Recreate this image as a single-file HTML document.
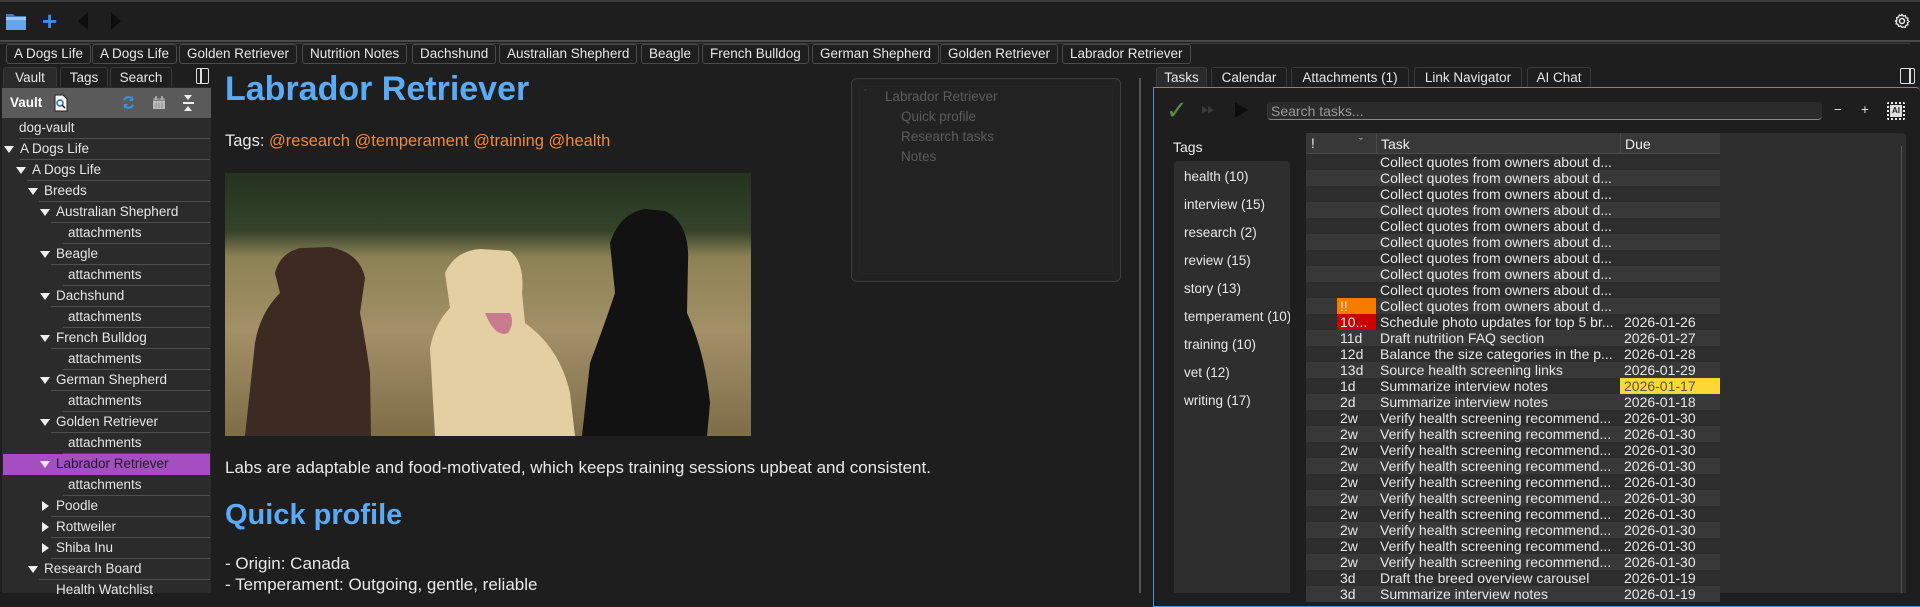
<!DOCTYPE html>
<html><head><meta charset="utf-8">
<style>
*{box-sizing:border-box;margin:0;padding:0}
body{width:1920px;height:593px;overflow:hidden;background:#1e1e1e;font-family:"Liberation Sans",sans-serif;font-size:13.5px;color:#e6e6e6;position:relative}
.a{position:absolute;white-space:nowrap}
.chip{position:absolute;top:44px;height:20px;border:1px solid #4a4a4a;border-radius:3px;line-height:18px;padding:0 7px;color:#e8e8e8;font-size:13.5px;background:#1e1e1e}
.tab{position:absolute;top:67px;height:20px;border:1px solid #3a3a3a;border-bottom:none;border-radius:3px 3px 0 0;line-height:19px;text-align:center;color:#e8e8e8;background:#1e1e1e}
.row{position:absolute;left:0;width:211px;height:21px;line-height:20px}
.row .sep{position:absolute;bottom:0;right:1px;height:1px;background:#4e4e4e}
.row .t{position:absolute;top:0}
.tri{position:absolute;top:7px;width:0;height:0;border-left:5px solid transparent;border-right:5px solid transparent;border-top:7px solid #eee}
.trr{position:absolute;top:5px;width:0;height:0;border-top:5px solid transparent;border-bottom:5px solid transparent;border-left:7px solid #eee}
.tr{position:absolute;left:1306px;width:414px;height:16px;line-height:16px;font-size:14px;color:#e8e8e8}
.tr span{position:absolute;top:0;height:16px}
.tag{position:absolute;left:1184px;font-size:13.5px;color:#e8e8e8}
</style></head><body>
<div class="a" style="left:0;top:0;width:1920px;height:2px;background:#3c3c3c"></div>
<svg class="a" style="left:5px;top:12px" width="22" height="19" viewBox="0 0 22 19"><path d="M1 2h7l2 2h11v14H1z" fill="#3d7cc9"/><rect x="1" y="5" width="20" height="13" fill="#6aa4e6"/><rect x="1" y="5" width="20" height="3" fill="#9cc6f2"/></svg>
<div class="a" style="left:42px;top:6px;font-size:26px;font-weight:bold;color:#3a8ee6;line-height:30px">+</div>
<div class="a" style="left:78px;top:12px;width:0;height:0;border-top:9px solid transparent;border-bottom:9px solid transparent;border-right:10px solid #0d0d0d"></div>
<div class="a" style="left:111px;top:12px;width:0;height:0;border-top:9px solid transparent;border-bottom:9px solid transparent;border-left:10px solid #0d0d0d"></div>
<svg class="a" style="left:1894px;top:13px" width="16" height="16" viewBox="0 0 16 16"><circle cx="8" cy="8" r="2.5" fill="none" stroke="#eee" stroke-width="1.5"/><path d="M8 1.5l1.3 1.6 2-.5.6 2 2 .6-.5 2 1.6 1.3-1.6 1.3.5 2-2 .6-.6 2-2-.5L8 14.5l-1.3-1.6-2 .5-.6-2-2-.6.5-2L1.5 8l1.6-1.3-.5-2 2-.6.6-2 2 .5z" fill="none" stroke="#eee" stroke-width="1.3"/></svg>
<div class="a" style="left:0;top:40px;width:1920px;height:2px;background:#4a4a4a"></div>
<div class="a" style="left:0;top:43px;width:1910px;height:1px;background:#3c3c3c"></div>
<div class="chip" style="left:6px">A Dogs Life</div>
<div class="chip" style="left:92px">A Dogs Life</div>
<div class="chip" style="left:179px">Golden Retriever</div>
<div class="chip" style="left:302px">Nutrition Notes</div>
<div class="chip" style="left:412px">Dachshund</div>
<div class="chip" style="left:499px">Australian Shepherd</div>
<div class="chip" style="left:641px">Beagle</div>
<div class="chip" style="left:702px">French Bulldog</div>
<div class="chip" style="left:812px">German Shepherd</div>
<div class="chip" style="left:940px">Golden Retriever</div>
<div class="chip" style="left:1062px">Labrador Retriever</div>
<div class="tab" style="left:3px;width:54px;background:#2b2b2b">Vault</div>
<div class="tab" style="left:60px;width:48px">Tags</div>
<div class="tab" style="left:110px;width:62px">Search</div>
<div class="a" style="left:196px;top:68px;width:13px;height:16px;border:1.5px solid #ddd;border-radius:2px"></div>
<div class="a" style="left:200px;top:68px;width:1.5px;height:16px;background:#ddd"></div>
<div class="a" style="left:2px;top:87px;width:209px;height:506px;background:#2b2b2b"></div>
<div class="a" style="left:2px;top:88px;width:209px;height:30px;background:#5a5a5a"></div>
<div class="a" style="left:10px;top:95px;font-weight:bold;color:#fff;font-size:13.5px">Vault</div>
<svg class="a" style="left:53px;top:94px" width="16" height="18" viewBox="0 0 16 18"><path d="M2 1h8l4 4v12H2z" fill="#f4f4f4" stroke="#222"/><circle cx="7" cy="9" r="3" fill="none" stroke="#2b6cb0" stroke-width="1.5"/><path d="M9 11l3 3" stroke="#222" stroke-width="1.5"/></svg>
<svg class="a" style="left:121px;top:95px" width="15" height="15" viewBox="0 0 15 15"><path d="M12 5A5 5 0 0 0 3 5M3 10a5 5 0 0 0 9 0" fill="none" stroke="#3d8fe0" stroke-width="2.2"/><path d="M12 1v5H8zM3 14V9h4z" fill="#3d8fe0"/></svg>
<svg class="a" style="left:152px;top:95px" width="14" height="15" viewBox="0 0 14 15"><rect x="1" y="3" width="12" height="11" fill="#bbb"/><rect x="1" y="3" width="12" height="3" fill="#888"/><path d="M4 1v4M10 1v4" stroke="#bbb" stroke-width="1.5"/><path d="M4 8v5M7 8v5M10 8v5" stroke="#888"/></svg>
<div class="a" style="left:183px;top:95px;width:11px;height:16px"><div class="a" style="left:0;top:7px;width:11px;height:1.5px;background:#eee"></div><div class="a" style="left:1px;top:0;width:0;height:0;border-left:4.5px solid transparent;border-right:4.5px solid transparent;border-top:5px solid #eee"></div><div class="a" style="left:1px;top:11px;width:0;height:0;border-left:4.5px solid transparent;border-right:4.5px solid transparent;border-bottom:5px solid #eee"></div></div>
<div class="a" style="left:0;top:118px;width:211px;height:475px">
<div class="row" style="top:0"><span class="t" style="left:19px">dog-vault</span><div class="sep" style="left:19px"></div></div>
<div class="row" style="top:21px"><div class="tri" style="left:4px"></div><span class="t" style="left:20px">A Dogs Life</span><div class="sep" style="left:20px"></div></div>
<div class="row" style="top:42px"><div class="tri" style="left:16px"></div><span class="t" style="left:32px">A Dogs Life</span><div class="sep" style="left:27px"></div></div>
<div class="row" style="top:63px"><div class="tri" style="left:28px"></div><span class="t" style="left:44px">Breeds</span><div class="sep" style="left:39px"></div></div>
<div class="row" style="top:84px"><div class="tri" style="left:40px"></div><span class="t" style="left:56px">Australian Shepherd</span><div class="sep" style="left:51px"></div></div>
<div class="row" style="top:105px"><span class="t" style="left:68px">attachments</span><div class="sep" style="left:63px"></div></div>
<div class="row" style="top:126px"><div class="tri" style="left:40px"></div><span class="t" style="left:56px">Beagle</span><div class="sep" style="left:51px"></div></div>
<div class="row" style="top:147px"><span class="t" style="left:68px">attachments</span><div class="sep" style="left:63px"></div></div>
<div class="row" style="top:168px"><div class="tri" style="left:40px"></div><span class="t" style="left:56px">Dachshund</span><div class="sep" style="left:51px"></div></div>
<div class="row" style="top:189px"><span class="t" style="left:68px">attachments</span><div class="sep" style="left:63px"></div></div>
<div class="row" style="top:210px"><div class="tri" style="left:40px"></div><span class="t" style="left:56px">French Bulldog</span><div class="sep" style="left:51px"></div></div>
<div class="row" style="top:231px"><span class="t" style="left:68px">attachments</span><div class="sep" style="left:63px"></div></div>
<div class="row" style="top:252px"><div class="tri" style="left:40px"></div><span class="t" style="left:56px">German Shepherd</span><div class="sep" style="left:51px"></div></div>
<div class="row" style="top:273px"><span class="t" style="left:68px">attachments</span><div class="sep" style="left:63px"></div></div>
<div class="row" style="top:294px"><div class="tri" style="left:40px"></div><span class="t" style="left:56px">Golden Retriever</span><div class="sep" style="left:51px"></div></div>
<div class="row" style="top:315px"><span class="t" style="left:68px">attachments</span><div class="sep" style="left:63px"></div></div>
<div class="row" style="top:336px;left:3px;width:207px;background:#a54ec2"><div class="tri" style="left:37px;border-top-color:#f0e0f8"></div><span class="t" style="left:53px;color:#1e1e1e">Labrador Retriever</span></div>
<div class="row" style="top:357px"><span class="t" style="left:68px">attachments</span><div class="sep" style="left:63px"></div></div>
<div class="row" style="top:378px"><div class="trr" style="left:42px"></div><span class="t" style="left:56px">Poodle</span><div class="sep" style="left:51px"></div></div>
<div class="row" style="top:399px"><div class="trr" style="left:42px"></div><span class="t" style="left:56px">Rottweiler</span><div class="sep" style="left:51px"></div></div>
<div class="row" style="top:420px"><div class="trr" style="left:42px"></div><span class="t" style="left:56px">Shiba Inu</span><div class="sep" style="left:51px"></div></div>
<div class="row" style="top:441px"><div class="tri" style="left:28px"></div><span class="t" style="left:44px">Research Board</span><div class="sep" style="left:39px"></div></div>
<div class="row" style="top:462px"><span class="t" style="left:56px">Health Watchlist</span></div>
</div>
<div class="a" style="left:225px;top:70px;font-size:34px;font-weight:bold;color:#5aaaf6">Labrador Retriever</div>
<div class="a" style="left:225px;top:132px;font-size:16.5px;color:#e8e8e8">Tags: <span style="color:#f0883e">@research @temperament @training @health</span></div>
<svg class="a" style="left:225px;top:173px" width="526" height="263" viewBox="0 0 526 263">
<defs><linearGradient id="bg" x1="0" y1="0" x2="0" y2="1"><stop offset="0" stop-color="#25331f"/><stop offset=".22" stop-color="#34432a"/><stop offset=".32" stop-color="#8c8255"/><stop offset=".6" stop-color="#a39068"/><stop offset="1" stop-color="#7e6d48"/></linearGradient></defs>
<rect width="526" height="263" fill="url(#bg)"/>
<path d="M20 263 L30 170 Q35 140 55 120 L50 100 Q55 80 75 75 L105 74 Q135 80 140 105 L135 140 Q140 165 145 200 L146 263Z" fill="#3d2a22"/>
<path d="M210 263 L205 175 Q210 150 225 135 L220 100 Q230 78 255 76 L285 78 Q300 90 297 120 L300 150 Q335 175 345 220 L350 263Z" fill="#e4cfa4"/>
<path d="M260 140 Q270 165 283 160 Q290 150 285 140Z" fill="#c77c8e"/>
<path d="M357 263 L365 190 Q380 150 390 120 L385 70 Q395 40 420 36 L440 38 Q465 50 463 90 L462 140 Q480 180 485 230 L482 263Z" fill="#121212"/>
</svg>
<div class="a" style="left:225px;top:458px;font-size:17px;color:#e8e8e8">Labs are adaptable and food-motivated, which keeps training sessions upbeat and consistent.</div>
<div class="a" style="left:225px;top:499px;font-size:29px;font-weight:bold;color:#5aaaf6">Quick profile</div>
<div class="a" style="left:225px;top:554px;font-size:17px;color:#e8e8e8">- Origin: Canada</div>
<div class="a" style="left:225px;top:575px;font-size:17px;color:#e8e8e8">- Temperament: Outgoing, gentle, reliable</div>
<div class="a" style="left:851px;top:78px;width:270px;height:204px;border:1px solid #3e3e3e;border-radius:6px;background:#222"></div>
<div class="a" style="left:859px;top:86px;width:254px;height:188px;border:1px solid #262626;border-radius:3px"></div>
<div class="a" style="left:864px;top:88px;font-size:9px;color:#555">ˇ</div>
<div class="a" style="left:885px;top:89px;color:#5c5c5c">Labrador Retriever</div>
<div class="a" style="left:901px;top:109px;color:#5c5c5c">Quick profile</div>
<div class="a" style="left:901px;top:129px;color:#5c5c5c">Research tasks</div>
<div class="a" style="left:901px;top:149px;color:#5c5c5c">Notes</div>
<div class="a" style="left:1139px;top:78px;width:2px;height:515px;background:#555"></div>
<div class="tab" style="left:1156px;width:51px;background:#2b2b2b">Tasks</div>
<div class="tab" style="left:1211px;width:76px">Calendar</div>
<div class="tab" style="left:1291px;width:118px">Attachments (1)</div>
<div class="tab" style="left:1414px;width:108px">Link Navigator</div>
<div class="tab" style="left:1527px;width:64px">AI Chat</div>
<div class="a" style="left:1900px;top:68px;width:15px;height:16px;border:1.5px solid #ddd;border-radius:2px"></div>
<div class="a" style="left:1909px;top:68px;width:1.5px;height:16px;background:#ddd"></div>
<div class="a" style="left:1153px;top:87px;width:767px;height:520px;border:1px solid #4a8fdc;border-right:none;border-radius:0 4px 0 0"></div>
<div class="a" style="left:1166px;top:96px;font-size:26px;color:#5c8a44;line-height:28px">✓</div>
<div class="a" style="left:1202px;top:106px;width:0;height:0;border-top:4px solid transparent;border-bottom:4px solid transparent;border-left:6px solid #3a3a3a"></div>
<div class="a" style="left:1208px;top:106px;width:0;height:0;border-top:4px solid transparent;border-bottom:4px solid transparent;border-left:6px solid #3a3a3a"></div>
<div class="a" style="left:1235px;top:102px;width:0;height:0;border-top:8px solid transparent;border-bottom:8px solid transparent;border-left:13px solid #0d0d0d"></div>
<div class="a" style="left:1267px;top:102px;width:555px;height:18px;background:#2b2b2b;border-radius:4px;border-bottom:1px solid #888;border-left:1px solid #3a3a3a"></div>
<div class="a" style="left:1271px;top:103px;color:#9a9a9a;font-size:14px">Search tasks...</div>
<div class="a" style="left:1834px;top:102px;color:#ddd">−</div>
<div class="a" style="left:1861px;top:102px;color:#ddd">+</div>
<div class="a" style="left:1887px;top:102px;width:18px;height:18px;border:2px dotted #eee;border-radius:2px"></div>
<div class="a" style="left:1890px;top:105px;width:12px;height:12px;background:#ddd;color:#222;font-size:8px;font-weight:bold;line-height:12px;text-align:center">AI</div>
<div class="a" style="left:1173px;top:139px;font-size:14px;color:#eee">Tags</div>
<div class="a" style="left:1174px;top:161px;width:116px;height:432px;background:#2e2e2e;border-radius:4px 4px 0 0"></div>
<div class="tag" style="top:169px">health (10)</div>
<div class="tag" style="top:197px">interview (15)</div>
<div class="tag" style="top:225px">research (2)</div>
<div class="tag" style="top:253px">review (15)</div>
<div class="tag" style="top:281px">story (13)</div>
<div class="a" style="left:1184px;top:309px;width:106px;overflow:hidden;color:#e8e8e8">temperament (10)</div>
<div class="tag" style="top:337px">training (10)</div>
<div class="tag" style="top:365px">vet (12)</div>
<div class="tag" style="top:393px">writing (17)</div>
<div class="a" style="left:1306px;top:133px;width:600px;height:460px;background:#2d2d2d;border-radius:4px 4px 0 0"></div>
<div class="a" style="left:1306px;top:133px;width:414px;height:21px;background:#383838;border-bottom:1px solid #4a4a4a"></div>
<div class="a" style="left:1376px;top:133px;width:1px;height:21px;background:#4a4a4a"></div>
<div class="a" style="left:1620px;top:133px;width:1px;height:21px;background:#4a4a4a"></div>
<div class="a" style="left:1311px;top:136px;color:#eee">!</div>
<div class="a" style="left:1359px;top:137px;color:#ccc;font-size:11px">ˇ</div>
<div class="a" style="left:1381px;top:136px;color:#eee;font-size:14px">Task</div>
<div class="a" style="left:1625px;top:136px;color:#eee;font-size:14px">Due</div>
<div class="a" style="left:1901px;top:146px;width:1px;height:447px;background:#555"></div>
<div class="tr" style="top:154px;background:#2d2d2d"><span style="left:74px">Collect quotes from owners about d...</span></div>
<div class="tr" style="top:170px;background:#383838"><span style="left:74px">Collect quotes from owners about d...</span></div>
<div class="tr" style="top:186px;background:#2d2d2d"><span style="left:74px">Collect quotes from owners about d...</span></div>
<div class="tr" style="top:202px;background:#383838"><span style="left:74px">Collect quotes from owners about d...</span></div>
<div class="tr" style="top:218px;background:#2d2d2d"><span style="left:74px">Collect quotes from owners about d...</span></div>
<div class="tr" style="top:234px;background:#383838"><span style="left:74px">Collect quotes from owners about d...</span></div>
<div class="tr" style="top:250px;background:#2d2d2d"><span style="left:74px">Collect quotes from owners about d...</span></div>
<div class="tr" style="top:266px;background:#383838"><span style="left:74px">Collect quotes from owners about d...</span></div>
<div class="tr" style="top:282px;background:#2d2d2d"><span style="left:74px">Collect quotes from owners about d...</span></div>
<div class="tr" style="top:298px;background:#383838"><span style="left:31px;width:39px;background:#f57c00;padding-left:3px">!!</span><span style="left:74px">Collect quotes from owners about d...</span></div>
<div class="tr" style="top:314px;background:#2d2d2d"><span style="left:31px;width:39px;background:#cc0000;padding-left:3px;overflow:hidden">10...</span><span style="left:74px">Schedule photo updates for top 5 br...</span><span style="left:318px">2026-01-26</span></div>
<div class="tr" style="top:330px;background:#383838"><span style="left:34px">11d</span><span style="left:74px">Draft nutrition FAQ section</span><span style="left:318px">2026-01-27</span></div>
<div class="tr" style="top:346px;background:#2d2d2d"><span style="left:34px">12d</span><span style="left:74px">Balance the size categories in the p...</span><span style="left:318px">2026-01-28</span></div>
<div class="tr" style="top:362px;background:#383838"><span style="left:34px">13d</span><span style="left:74px">Source health screening links</span><span style="left:318px">2026-01-29</span></div>
<div class="tr" style="top:378px;background:#2d2d2d"><span style="left:34px">1d</span><span style="left:74px">Summarize interview notes</span><span style="left:314px;width:100px;background:#fdd835;color:#555;padding-left:4px">2026-01-17</span></div>
<div class="tr" style="top:394px;background:#383838"><span style="left:34px">2d</span><span style="left:74px">Summarize interview notes</span><span style="left:318px">2026-01-18</span></div>
<div class="tr" style="top:410px;background:#2d2d2d"><span style="left:34px">2w</span><span style="left:74px">Verify health screening recommend...</span><span style="left:318px">2026-01-30</span></div>
<div class="tr" style="top:426px;background:#383838"><span style="left:34px">2w</span><span style="left:74px">Verify health screening recommend...</span><span style="left:318px">2026-01-30</span></div>
<div class="tr" style="top:442px;background:#2d2d2d"><span style="left:34px">2w</span><span style="left:74px">Verify health screening recommend...</span><span style="left:318px">2026-01-30</span></div>
<div class="tr" style="top:458px;background:#383838"><span style="left:34px">2w</span><span style="left:74px">Verify health screening recommend...</span><span style="left:318px">2026-01-30</span></div>
<div class="tr" style="top:474px;background:#2d2d2d"><span style="left:34px">2w</span><span style="left:74px">Verify health screening recommend...</span><span style="left:318px">2026-01-30</span></div>
<div class="tr" style="top:490px;background:#383838"><span style="left:34px">2w</span><span style="left:74px">Verify health screening recommend...</span><span style="left:318px">2026-01-30</span></div>
<div class="tr" style="top:506px;background:#2d2d2d"><span style="left:34px">2w</span><span style="left:74px">Verify health screening recommend...</span><span style="left:318px">2026-01-30</span></div>
<div class="tr" style="top:522px;background:#383838"><span style="left:34px">2w</span><span style="left:74px">Verify health screening recommend...</span><span style="left:318px">2026-01-30</span></div>
<div class="tr" style="top:538px;background:#2d2d2d"><span style="left:34px">2w</span><span style="left:74px">Verify health screening recommend...</span><span style="left:318px">2026-01-30</span></div>
<div class="tr" style="top:554px;background:#383838"><span style="left:34px">2w</span><span style="left:74px">Verify health screening recommend...</span><span style="left:318px">2026-01-30</span></div>
<div class="tr" style="top:570px;background:#2d2d2d"><span style="left:34px">3d</span><span style="left:74px">Draft the breed overview carousel</span><span style="left:318px">2026-01-19</span></div>
<div class="tr" style="top:586px;background:#383838"><span style="left:34px">3d</span><span style="left:74px">Summarize interview notes</span><span style="left:318px">2026-01-19</span></div>
</body></html>
